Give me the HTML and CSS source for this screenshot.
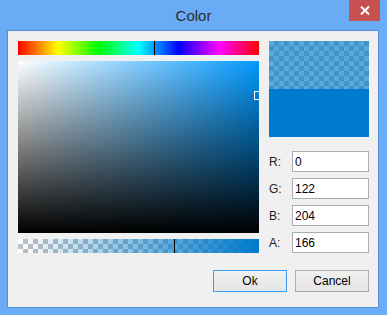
FILE: index.html
```html
<!DOCTYPE html>
<html lang="en">
<head>
    <meta charset="UTF-8">
    <meta name="viewport" content="width=device-width, initial-scale=1.0">
    <title>Color</title>
    <link rel="stylesheet" href="styles.css">
</head>
<body>

<div class="window">
    <div class="titlebar">
        <span></span>
        <span class="title">Color</span>
        <button class="close" aria-label="Close">
            <svg width="10" height="9" viewBox="0 0 10 9">
                <path d="M1 0.5 L9 8.5 M9 0.5 L1 8.5" stroke="#fff" stroke-width="2" fill="none"/>
            </svg>
        </button>
    </div>

    <div class="client">
        <div class="main">
            <div class="picker">
                <div class="hue"><span class="marker" style="left:136px"></span></div>
                <div class="sv"><span class="sv-handle" style="left:236px; top:30px"></span></div>
                <div class="alpha checker">
                    <div class="alpha-fill"></div>
                    <span class="marker" style="left:156px"></span>
                </div>
            </div>

            <div class="side">
                <div class="preview">
                    <div class="preview-alpha checker"><div class="preview-tint"></div></div>
                    <div class="preview-solid"></div>
                </div>

                <div class="fields">
                    <label class="field"><span>R:</span><input type="text" value="0"></label>
                    <label class="field"><span>G:</span><input type="text" value="122"></label>
                    <label class="field"><span>B:</span><input type="text" value="204"></label>
                    <label class="field"><span>A:</span><input type="text" value="166"></label>
                </div>
            </div>
        </div>

        <div class="buttons">
            <button class="btn btn-default">Ok</button>
            <button class="btn">Cancel</button>
        </div>
    </div>
</div>

</body>
</html>
```

FILE: styles.css
```css
body {
    margin: 0;
    font-family: "Liberation Sans", Arial, sans-serif;
    background-color: #6aabf5;
}
.window {
    width: 387px;
    height: 315px;
}
.titlebar {
    height: 30px;
    display: grid;
    grid-template-columns: 1fr auto 1fr;
}
.title {
    font-size: 15px;
    line-height: 32px;
    color: #2d2d2d;
}
.close {
    justify-self: end;
    width: 31px;
    height: 21px;
    margin-right: 7px;
    padding: 0;
    border: none;
    background-color: #c75050;
    display: flex;
    align-items: center;
    justify-content: center;
}
.client {
    box-sizing: border-box;
    width: 372px;
    height: 278px;
    margin: 0 8px 7px 7px;
    padding: 10px 9px 0 10px;
    border: 1px solid #5590d8;
    background-color: #f0f0f0;
}
.main {
    display: flex;
    gap: 10px;
}
.picker {
    width: 241px;
    display: flex;
    flex-direction: column;
    gap: 6px;
}
.hue {
    position: relative;
    height: 14px;
    background: linear-gradient(to right, #f00, #ff0, #0f0, #0ff, #00f, #f0f, #f00);
}
.marker {
    position: absolute;
    top: 0;
    bottom: 0;
    width: 1px;
    background-color: #000;
}
.sv {
    position: relative;
    height: 172px;
    overflow: hidden;
    background:
        linear-gradient(to top, #000, rgba(0,0,0,0)),
        linear-gradient(to right, #fff, #0099ff);
}
.sv-handle {
    position: absolute;
    width: 7px;
    height: 7px;
    border: 1px solid #fff;
}
.checker {
    background-color: #fff;
    background-image:
        linear-gradient(45deg, #c0c0c0 25%, transparent 25%, transparent 75%, #c0c0c0 75%),
        linear-gradient(45deg, #c0c0c0 25%, transparent 25%, transparent 75%, #c0c0c0 75%);
    background-size: 10px 10px;
    background-position: 0 0, 5px 5px;
}
.alpha {
    position: relative;
    height: 14px;
}
.alpha-fill {
    height: 100%;
    background: linear-gradient(to right, rgba(0,122,204,0), #007acc);
}
.side {
    width: 100px;
}
.preview {
    height: 96px;
    display: flex;
    flex-direction: column;
}
.preview-alpha {
    height: 48px;
}
.preview-tint {
    height: 100%;
    background-color: rgba(0,122,204,0.65);
}
.preview-solid {
    flex: 1;
    background-color: #007acc;
}
.fields {
    margin-top: 14px;
    display: flex;
    flex-direction: column;
    gap: 6px;
}
.field {
    display: flex;
    align-items: center;
    height: 21px;
    font-size: 12px;
    color: #1e1e1e;
}
.field span {
    width: 23px;
}
.field input {
    box-sizing: border-box;
    width: 77px;
    height: 21px;
    margin: 0;
    padding: 0 2px;
    border: 1px solid #abadb3;
    background-color: #fff;
    font-family: "Liberation Sans", Arial, sans-serif;
    font-size: 12px;
    color: #000;
    outline: none;
}
.buttons {
    margin-top: 17px;
    display: flex;
    justify-content: flex-end;
    gap: 8px;
}
.btn {
    box-sizing: border-box;
    width: 74px;
    height: 22px;
    padding: 0;
    border: 1px solid #acacac;
    background: linear-gradient(to bottom, #f0f0f0, #e5e5e5);
    font-family: "Liberation Sans", Arial, sans-serif;
    font-size: 12px;
    color: #000;
}
.btn-default {
    border-color: #3c9cf4;
}
```
